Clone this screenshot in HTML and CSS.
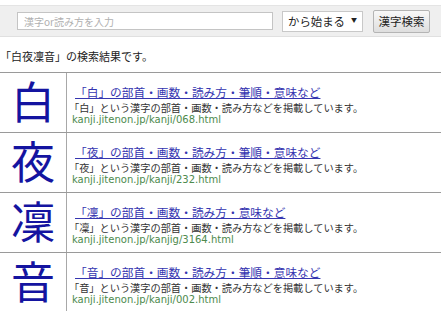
FILE: index.html
```html
<!DOCTYPE html>
<html lang="ja">
<head>
    <meta charset="UTF-8">
    <meta name="viewport" content="width=device-width, initial-scale=1.0">
    <title>漢字検索</title>
    <link rel="stylesheet" href="styles.css">
</head>
<body>
    <form class="search-bar">
        <input class="search-input" type="text" placeholder="漢字or読み方を入力">
        <label class="select-wrap">
            <select class="search-mode">
                <option>から始まる</option>
                <option>を含む</option>
                <option>で終わる</option>
            </select>
            <span class="select-arrow">▼</span>
        </label>
        <button class="search-btn" type="button">漢字検索</button>
    </form>

    <p class="result-title">「白夜凜音」の検索結果です。</p>

    <div class="results">
        <div class="result">
            <div class="result-kanji">白</div>
            <div class="result-body">
                <a class="result-link" href="#">「白」の部首・画数・読み方・筆順・意味など</a>
                <p class="result-desc">「白」という漢字の部首・画数・読み方などを掲載しています。</p>
                <p class="result-url">kanji.jitenon.jp/kanji/068.html</p>
            </div>
        </div>
        <div class="result">
            <div class="result-kanji">夜</div>
            <div class="result-body">
                <a class="result-link" href="#">「夜」の部首・画数・読み方・筆順・意味など</a>
                <p class="result-desc">「夜」という漢字の部首・画数・読み方などを掲載しています。</p>
                <p class="result-url">kanji.jitenon.jp/kanji/232.html</p>
            </div>
        </div>
        <div class="result">
            <div class="result-kanji">凜</div>
            <div class="result-body">
                <a class="result-link" href="#">「凜」の部首・画数・読み方・意味など</a>
                <p class="result-desc">「凜」という漢字の部首・画数・読み方などを掲載しています。</p>
                <p class="result-url">kanji.jitenon.jp/kanjig/3164.html</p>
            </div>
        </div>
        <div class="result">
            <div class="result-kanji">音</div>
            <div class="result-body">
                <a class="result-link" href="#">「音」の部首・画数・読み方・筆順・意味など</a>
                <p class="result-desc">「音」という漢字の部首・画数・読み方などを掲載しています。</p>
                <p class="result-url">kanji.jitenon.jp/kanji/002.html</p>
            </div>
        </div>
    </div>
</body>
</html>
```

FILE: styles.css
```css
body {
    margin: 0;
    background-color: #fff;
    color: #333;
    font-family: "Noto Sans CJK JP", "DejaVu Sans", sans-serif;
}

.search-bar {
    display: flex;
    align-items: center;
    height: 32px;
    margin: 5px 0 0;
    padding-left: 17px;
    background-color: #efefef;
    border-top: 1px solid #e4e4e4;
    border-bottom: 1px solid #e0e0e0;
    box-sizing: border-box;
}

.search-input {
    width: 256px;
    height: 18px;
    margin: 0;
    padding: 0 6px;
    border: 1px solid #c4c4c4;
    box-sizing: border-box;
    background-color: #fff;
    font-family: "Noto Sans CJK JP", sans-serif;
    font-size: 10px;
    outline: none;
}

.search-input::placeholder {
    color: #b0b0b0;
}

.select-wrap {
    position: relative;
    display: block;
    margin-left: 9px;
}

.search-mode {
    display: block;
    width: 81px;
    height: 21px;
    margin: 0;
    padding: 0 0 0 5px;
    border: 1px solid #c8c8c8;
    border-radius: 0;
    background-color: #fff;
    color: #222;
    font-family: "Noto Sans CJK JP", sans-serif;
    font-size: 11.4px;
    appearance: none;
    -webkit-appearance: none;
    outline: none;
}

.select-arrow {
    position: absolute;
    top: 4px;
    right: 6px;
    font-size: 6px;
    color: #222;
    pointer-events: none;
}

.search-btn {
    width: 57px;
    height: 23px;
    margin: 0 0 0 10px;
    padding: 0;
    border: 1px solid #b4b4b4;
    border-radius: 2px;
    background: linear-gradient(#f8f8f8, #dedede);
    color: #222;
    font-family: "Noto Sans CJK JP", sans-serif;
    font-size: 11.5px;
}

.result-title {
    margin: 0;
    padding-top: 11px;
    height: 24px;
    font-size: 11px;
    line-height: 16px;
    color: #222;
}

.results {
    border-bottom: 1px solid #999;
}

.result {
    display: grid;
    grid-template-columns: 67px 1fr;
    height: 60px;
    border-top: 1px solid #9a9a9a;
    box-sizing: border-box;
}

.result-kanji {
    display: flex;
    align-items: center;
    justify-content: center;
    border-right: 1px solid #a8a8a8;
    color: #1414a0;
    font-size: 44px;
    line-height: 1;
    padding-bottom: 5px;
}

.result-body {
    padding: 5px 0 0 2px;
}

.result-link {
    display: inline-block;
    margin-left: 6px;
    color: #3535b0;
    font-size: 11.7px;
    line-height: 14px;
    text-decoration: underline;
}

.result-desc {
    margin: 0;
    font-size: 10.2px;
    line-height: 12px;
    color: #333;
}

.result-url {
    margin: 0 0 0 3px;
    font-family: "DejaVu Sans", sans-serif;
    font-size: 10px;
    line-height: 12px;
    color: #4d8a4d;
}
```
